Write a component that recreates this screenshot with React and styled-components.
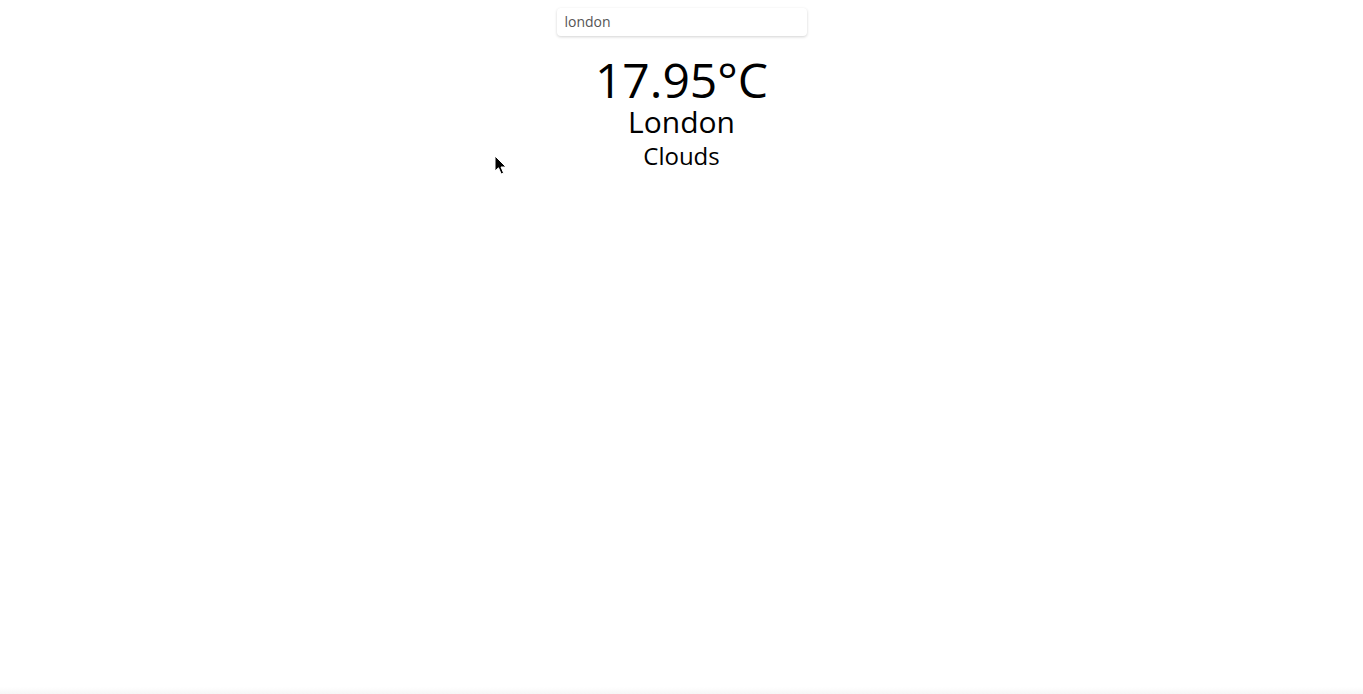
import React, { useState } from "react";
import styled, { createGlobalStyle } from "styled-components";

const GlobalStyle = createGlobalStyle`
  html, body {
    margin: 0;
    padding: 0;
    background: #ffffff;
  }
  body {
    font-family: "Open Sans", "Noto Sans", sans-serif;
    color: #000;
  }
`;

const Page = styled.div`
  min-height: 100vh;
  box-sizing: border-box;
  display: flex;
  flex-direction: column;
  align-items: center;
  padding-top: 8px;
  background: linear-gradient(to bottom, #ffffff calc(100% - 7px), #f6f6f6 100%);
`;

const SearchInput = styled.input`
  width: 250px;
  height: 28px;
  box-sizing: border-box;
  border: none;
  outline: none;
  border-radius: 4px;
  padding: 0 8px 2px;
  font-family: "Open Sans", "Noto Sans", sans-serif;
  font-size: 14px;
  color: #555;
  background: #fff;
  box-shadow: 0 1px 3px rgba(0, 0, 0, 0.18);
`;

const Weather = styled.div`
  display: flex;
  flex-direction: column;
  align-items: center;
  margin-top: 17px;
`;

const Temp = styled.div`
  font-size: 48px;
  line-height: 53px;
`;

const City = styled.div`
  font-size: 30px;
  line-height: 31px;
`;

const Sky = styled.div`
  font-size: 24px;
  line-height: 38px;
`;

const Cursor = styled.svg`
  position: fixed;
  left: 494px;
  top: 155px;
  pointer-events: none;
`;

export default function App() {
  const [query, setQuery] = useState("london");
  return (
    <>
      <GlobalStyle />
      <Page>
        <SearchInput value={query} onChange={(e) => setQuery(e.target.value)} />
        <Weather>
          <Temp>17.95°C</Temp>
          <City>London</City>
          <Sky>Clouds</Sky>
        </Weather>
      </Page>
      <Cursor width="14" height="21" viewBox="0 0 14 21">
        <path
          d="M1 1 L1 16 L4.5 12.8 L7.2 19 L9.6 18 L7 12 L12 12 Z"
          fill="#000"
          stroke="#fff"
          strokeWidth="1"
          strokeLinejoin="round"
        />
      </Cursor>
    </>
  );
}
